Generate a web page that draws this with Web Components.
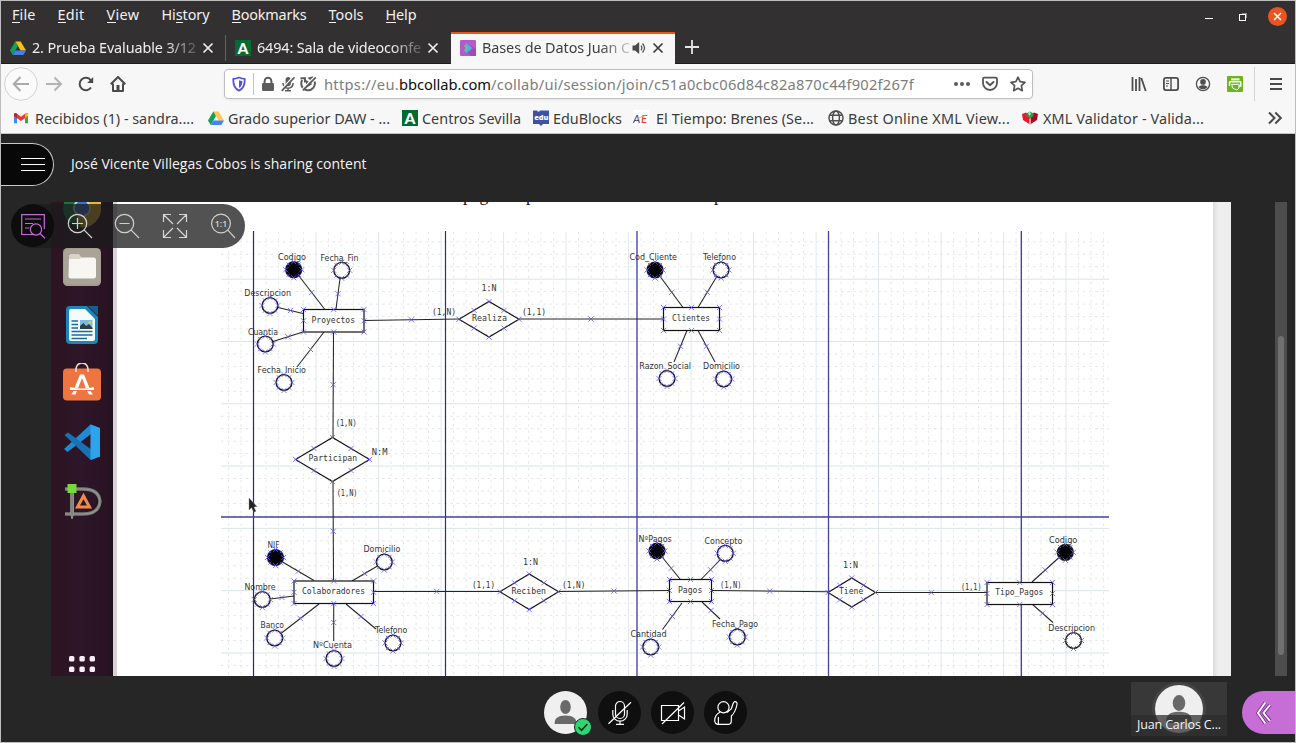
<!DOCTYPE html>
<html lang="es">
<head>
<meta charset="utf-8">
<title>Bases de Datos</title>
<style>
html,body{margin:0;height:100%;overflow:hidden;background:#262626}
body{font-family:"Noto Sans","Open Sans",sans-serif}
</style>
</head>
<body>
<browser-window></browser-window>
<script>
const define=(name,css,html,after)=>{
  const t=document.createElement('template');
  t.innerHTML=`<style>*{box-sizing:border-box}${css}</style>${html}`;
  customElements.define(name,class extends HTMLElement{
    connectedCallback(){
      if(this.shadowRoot)return;
      this.attachShadow({mode:'open'}).append(t.content.cloneNode(true));
      if(after)after(this,this.shadowRoot);
    }
  });
};

/* Text that spreads its letters to fill a given advance width */
define('fit-text',':host{display:inline-block;white-space:pre;flex:none}span{display:inline-block}','<span><slot></slot></span>',(el,root)=>{
  const w=+el.getAttribute('w'), s=root.querySelector('span');
  el.style.width=w+'px';
  s.style.letterSpacing=((w-s.getBoundingClientRect().width)/el.textContent.length)+'px';
});

const person='<circle cx="24" cy="24" r="24" fill="#efefef"/>';
const drive=(a,b,c)=>`<path d="M5.3 1.5H10.7L16 10.5H10.6Z" fill="${b}"/><path d="M5.3 1.5L0 10.5L2.7 15L8 6Z" fill="${a}"/><path d="M5.4 10.5H16L13.3 15H2.7Z" fill="${c}"/>`;
const ICONS={
 drive:[16,16,drive('#12a05c','#fdbf12','#3f7ff0')],
 drive2:[16,16,drive('#12a05c','#fdc95a','#4285f4')],
 junta:[16,16,'<rect width="16" height="16" fill="#036a31"/><text x="8" y="13.6" text-anchor="middle" font-family="Lato" font-weight="900" font-size="15.5" fill="#fff">A</text>'],
 collab:[16,16,'<rect width="16" height="16" rx="1.2" fill="#b55ac8"/><path d="M9 5L13 8.5L8 13L11 16H16V9Z" fill="#a14ab6"/><path d="M5.5 3.8L10.3 8L5.5 12.3" fill="none" stroke="#29c6e8" stroke-width="2.2"/><path d="M4.5 5.8L7.3 8L4.5 10.4" fill="none" stroke="#6be06a" stroke-width="1.3"/>'],
 close:[12,12,'<path d="M1.5 1.5L10.5 10.5M10.5 1.5L1.5 10.5" stroke="currentColor" stroke-width="1.7" fill="none"/>'],
 plus:[14,14,'<path d="M7 0V14M0 7H14" stroke="#e6e6e6" stroke-width="1.8"/>'],
 sound:[14,14,'<path d="M0.5 4.5H3L7.2 1V13L3 9.5H.5Z" fill="#4a4a4a"/><path d="M9 4.6Q10.6 7 9 9.4M10.5 2.5Q14.5 7 10.5 11.5" stroke="#4a4a4a" fill="none" stroke-width="1.2"/>'],
 back:[34,34,'<circle cx="17" cy="17" r="16.3" fill="#fbfbfb" stroke="#d2d2d2"/><path d="M25 17H10M16.5 10L9.7 17L16.5 24" fill="none" stroke="#ababab" stroke-width="2"/>'],
 forward:[18,18,'<path d="M1 9H16M9.5 2.5L16 9L9.5 15.5" fill="none" stroke="#b3b3b3" stroke-width="2"/>'],
 reload:[16,16,'<path d="M13 11.5A6.2 6.2 0 1 1 12.8 4.3" fill="none" stroke="#4a4a4a" stroke-width="2"/><path d="M15.2 1V7H9.2Z" fill="#4a4a4a"/>'],
 home:[16,16,'<path d="M.7 8.3L8 1L15.3 8.3M3 7.5V15H13V7.5" fill="none" stroke="#4a4a4a" stroke-width="2" stroke-linejoin="round"/><path d="M6.5 9H9.5V15H6.5Z" fill="#4a4a4a"/>'],
 shield:[14,16,'<path d="M7 1.5C9 2.4 11 2.8 12.7 2.8C13 9 11.5 12.8 7 14.6C2.5 12.8 1 9 1.3 2.8C3 2.8 5 2.4 7 1.5Z" fill="none" stroke="#5551d8" stroke-width="1.8" stroke-linejoin="round"/><path d="M7 4.3V12C9.6 10.6 10.4 8 10.4 5Q8.4 4.8 7 4.3Z" fill="#5551d8"/>'],
 lock:[14,16,'<rect x="1" y="7" width="12" height="8" rx="1.3" fill="#5c5c5c"/><path d="M3.6 8V5.2A3.4 3.4 0 0 1 10.4 5.2V8" fill="none" stroke="#5c5c5c" stroke-width="2"/>'],
 micblock:[14,16,'<rect x="4.6" y="1" width="5.2" height="9.2" rx="2.6" fill="#5c5c5c"/><path d="M2 7Q2.5 12.2 7 12.2Q11.7 12.2 12.2 7M7 12V14.5M4 14.7H10" stroke="#5c5c5c" fill="none" stroke-width="1.6"/><path d="M0 14L12 1" stroke="#fff" stroke-width="1.6"/><path d="M.8 14.8L13.5 1.3" stroke="#5c5c5c" stroke-width="1.8"/>'],
 autoblock:[17,16,'<path d="M2.2 4A6.8 6.8 0 1 0 14.6 5.5M.5 2.2H5V6.5M12 4.2L9.5 2.2L13.5 1.2" fill="none" stroke="#5c5c5c" stroke-width="2"/><path d="M6 4V12L12.4 8Z" fill="#5c5c5c"/><path d="M2 13.6L14.2 1" stroke="#fff" stroke-width="1.5"/><path d="M2.8 14.4L15.8 1.3" stroke="#5c5c5c" stroke-width="1.8"/>'],
 dots:[16,16,'<g fill="#5b5b5b"><circle cx="2" cy="8" r="2"/><circle cx="8" cy="8" r="2"/><circle cx="14" cy="8" r="2"/></g>'],
 pocket:[16,16,'<path d="M2.2 1.7H13.8Q15 1.7 15 2.9V7A7 7 0 0 1 1 7V2.9Q1 1.7 2.2 1.7Z" fill="none" stroke="#565656" stroke-width="1.8"/><path d="M4.5 6L8 9.2L11.5 6" fill="none" stroke="#565656" stroke-width="2" stroke-linecap="round"/>'],
 star:[16,16,'<path d="M8 1.2L10.1 5.7L15 6.3L11.4 9.7L12.3 14.7L8 12.3L3.7 14.7L4.6 9.7L1 6.3L5.9 5.7Z" fill="none" stroke="#565656" stroke-width="1.7" stroke-linejoin="round"/>'],
 library:[16,16,'<path d="M1.5 1V15M5 3V15M8.5 1V15M10.3 2L14.7 15" stroke="#4d4d4d" stroke-width="1.8"/>'],
 sidebar:[16,16,'<rect x=".9" y="1.9" width="14.2" height="12.2" rx="2" fill="none" stroke="#4d4d4d" stroke-width="1.8"/><path d="M8 2V14" stroke="#4d4d4d" stroke-width="1.4"/><path d="M3 5H6M3 7.5H6M3 10H5" stroke="#4d4d4d"/>'],
 account:[16,16,'<circle cx="8" cy="8" r="6.6" fill="none" stroke="#4d4d4d" stroke-width="1.3"/><circle cx="8" cy="5.9" r="2.8" fill="#4d4d4d"/><path d="M3.5 11Q5 9 8 9.3Q11 9 12.5 11Q11 13.2 8 13.2Q5 13.2 3.5 11Z" fill="#4d4d4d"/>'],
 print:[16,16,'<rect width="16" height="16" rx="1" fill="#6cb51c"/><rect x="4" y="2.4" width="8.5" height="2" fill="#fff"/><path d="M2.5 10V6.5Q2.5 5.8 3.3 5.8H13Q13.8 5.8 13.8 6.5V10H12" fill="none" stroke="#fff" stroke-width="1.4"/><path d="M4.7 8.3H12V12L9.8 14L5.5 12Z" fill="#6cb51c" stroke="#fff"/>'],
 menu:[12,14,'<path d="M0 2H12M0 7H12M0 12H12" stroke="#4a4a4a" stroke-width="2"/>'],
 gmail:[16,16,'<path d="M1 4.2V13.3H4V7.5Z" fill="#4285f4"/><path d="M15 4.2V13.3H12V7.5Z" fill="#34a853"/><path d="M1 3.5L3 3L8 6.8L13 3L15 3.5V6L8 11L1 6Z" fill="#e93b30"/><path d="M12 4L13.6 2.9L15 3.8V6L12 8Z" fill="#fbbc04"/><path d="M1 6L4 8V4L2.6 2.9L1 3.8Z" fill="#c5221f"/>'],
 edu:[16,16,'<path d="M0 .5H4Q5.5 3 7 .5H16V14H10Q8 17.5 6 14H0Z" fill="#3f52a4"/><text x="8.3" y="10.3" text-anchor="middle" font-family="Open Sans" font-weight="800" font-size="7.4" fill="#fff">edu</text>'],
 ae:[16,16,'<rect width="16" height="16" fill="#fff"/><text x="0" y="12.8" font-family="Lato" font-style="italic" font-size="11.5" fill="#2b3f93">A</text><text x="8" y="12.8" font-family="Lato" font-style="italic" font-size="11.5" fill="#e23338">E</text><path d="M3 10.5Q8 6 13 5" stroke="#f5a623" fill="none" stroke-width=".8"/>'],
 globe:[16,16,'<g fill="none" stroke="#505050" stroke-width="1.5"><circle cx="8" cy="8" r="7"/><ellipse cx="8" cy="8" rx="3.4" ry="7"/><path d="M1.5 5.3H14.5M1.5 10.7H14.5"/></g>'],
 xml:[16,16,'<path d="M0 4L4 2.5L8 6V14.5L1 10Z" fill="#e8182c"/><path d="M16 4L12 2.5L8 6V14.5L15 10Z" fill="#a80c1c"/><path d="M4.5 3.5L8 1.5L11.5 3.5V6L8 8.5L4.5 6Z" fill="#2e9a4b"/><path d="M6 3L8 1.8L9 3.8L7.5 6Z" fill="#c9d8c5"/><path d="M7 9L9 8V13.5L8 14.5L7 14Z" fill="#f5a0a8"/>'],
 more:[14,14,'<path d="M1 1.5L6.5 7L1 12.5M7.3 1.5L12.8 7L7.3 12.5" fill="none" stroke="#4a4a4a" stroke-width="2"/>'],
 page:[26,26,'<g fill="none" stroke="#c469d8" stroke-width="1.2"><path d="M24.3 16V1.7H1.7V21.5H14.5M5 6H21M5 10.5H13M5 15H9.5"/><circle cx="16" cy="16.5" r="5.6"/><path d="M20 20.5L25 25.2"/></g>'],
 zin:[26,26,'<g fill="none" stroke="#d4d4d4" stroke-width="1.2"><circle cx="10.5" cy="10.5" r="9.2"/><path d="M17.2 17.2L25 25M10.5 5V16M5 10.5H16"/></g>'],
 zout:[26,26,'<g fill="none" stroke="#cfcfcf" stroke-width="1.2"><circle cx="10.5" cy="10.5" r="9.2"/><path d="M17.2 17.2L25 25M5.5 10.5H15.5"/></g>'],
 expand:[26,26,'<path d="M1.5 9V1.5H9M17 1.5H24.5V9M24.5 17V24.5H17M9 24.5H1.5V17M1.5 1.5L11 11M24.5 1.5L15 11M24.5 24.5L15 15M1.5 24.5L11 15" fill="none" stroke="#d6d6d6" stroke-width="1.2"/>'],
 one:[26,26,'<g fill="none" stroke="#cfcfcf" stroke-width="1.2"><circle cx="11" cy="10.5" r="9.4"/><path d="M17.8 17.2L25 25"/></g><text x="11" y="13.7" text-anchor="middle" font-family="Open Sans" font-size="8.8" font-weight="600" fill="#d6d6d6">1:1</text>'],
 mic:[26,26,'<g fill="none" stroke="#fff" stroke-width="1.2"><rect x="8.5" y="1.5" width="9" height="17" rx="4.5"/><path d="M5.8 10V14A7.2 7.2 0 0 0 20.2 14V10M13 21.5V24.2M9 24.3H17M1.5 23.8L24 2.3"/></g>'],
 cam:[26,26,'<g fill="none" stroke="#fff" stroke-width="1.2"><path d="M1.5 5.5H18.5V20.5H1.5ZM18.5 11L24.5 7V19L18.5 15M2 24L24 2.5"/></g>'],
 hand:[26,26,'<g fill="none" stroke="#fff" stroke-width="1.2"><circle cx="10.5" cy="7.3" r="5.6"/><path d="M7 12.3C3.5 13.5 1.5 17.5 1.6 21Q2 23.7 4.5 24.3H15.5Q18.5 24 18.3 20.5L18.4 16C21 13.5 23 9.5 24 4.5Q24.4 1.5 21.7 1.7C20 2 19.5 6 18.2 9L14 12.5M5.4 17V24"/></g>'],
 chev:[16,24,'<path d="M9.3 1.5L2 12L9.3 22.5M14 4L7.5 12L14 20" fill="none" stroke="#7d2e92" stroke-width="3.6" stroke-linejoin="round"/><path d="M9.3 1.5L2 12L9.3 22.5M14 4L7.5 12L14 20" fill="none" stroke="#fff" stroke-width="1.9"/>'],
 person:[48,48,person+'<ellipse cx="24" cy="18" rx="6.3" ry="7.9" fill="#696969"/><path d="M11 38Q10.5 26.5 24 26.8Q37.5 26.5 37 38Z" fill="#696969"/>'],
 me:[43,43,'<circle cx="21.5" cy="21.5" r="21.5" fill="#f0f0f0"/><ellipse cx="21.5" cy="16" rx="5.3" ry="7" fill="#696969"/><path d="M10.7 33Q10 24.5 21.5 24.5Q33 24.5 32.3 33Z" fill="#696969"/>'],
 /* dock */
 chrome:[38,26,'<circle cx="19" cy="6.5" r="19" fill="#17763c"/><path d="M19 6.5L35.5 -3A19 19 0 0 1 19 25.5L13 17Z" fill="#d8ab2b"/><path d="M0 -5H38V2H19Z" fill="#c93a2c"/><path d="M38 -2H19V4H38Z" fill="#e8b92d"/><circle cx="19" cy="6" r="9" fill="#d8d8d8"/><circle cx="19" cy="6" r="7.2" fill="#3b73c7"/>'],
 files:[38,38,'<rect width="38" height="38" rx="4.5" fill="#a39c8f"/><rect x="1" y="1" width="36" height="35" rx="4" fill="#aaa398"/><path d="M6 9Q6 6.5 8 6.5H16L18 9.5H31Q33 9.5 33 12V28Q33 30.5 30.5 30.5H8Q5.5 30.5 5.5 28Z" fill="#f8f6f2"/><path d="M7 6.5H16L18 9.5L17 11H6V8Z" fill="#d9d3c9"/>'],
 writer:[34,40,'<path d="M5 1H22L33 12V35Q33 39 29 39H5Q1 39 1 35V5Q1 1 5 1Z" fill="#1b86b7"/><path d="M6 4H20L30 14V34Q30 36 28 36H6Q4 36 4 34V6Q4 4 6 4Z" fill="#f5fafc"/><path d="M23 1H33V11Z" fill="#0f628d"/><path d="M6.5 16H13M6.5 19.5H13M6.5 23H13M6.5 26.5H27.5M6.5 30H27.5M6.5 33.5H22" stroke="#176d9c" stroke-width="1.3"/><rect x="15" y="15" width="12.5" height="9" fill="#7bbde0"/><path d="M15 24V21L18.5 18L21 21L24 19L27.5 23V24Z" fill="#2c3e46"/><circle cx="25" cy="17.2" r="1.3" fill="#f6c62d"/>'],
 soft:[38,38,'<rect y="5.5" width="38" height="32" rx="4" fill="#ee7440"/><path d="M13 9V6A6 6 0 0 1 25 6V9" fill="none" stroke="#f5d5c3" stroke-width="1.7"/><path d="M17 11.5H21L26.5 25H22.8L19 15L15.2 25H11.5Z" fill="#fff"/><path d="M7 24Q19 27 31 24V27H7Z" fill="#fff"/><path d="M10.5 28H14L12.5 31.5H8.5ZM24 28H27.5L30 31.5H26Z" fill="#fff"/>'],
 code:[38,38,'<path d="M27.5 1.5L37 5V33.5L27.5 37L28 11L4.5 29L1 26Z" fill="#1f8ad2"/><path d="M1.5 12L5 9.5L29 27L27.5 37Z" fill="#1672b4"/><path d="M27.5 1.5L37 5V33.5L27.5 37V28.5Z" fill="#2ca4ec"/>'],
 dia:[40,38,'<path d="M2 7H20Q36 7 37 19.5Q36 32 20 32H2" fill="none" stroke="#777b77" stroke-width="3.3"/><path d="M2 7H20Q36 7 37 19.5Q36 32 20 32H2" fill="none" stroke="#969a95" stroke-width="1.2"/><path d="M7.7 5V32L9 37L10.5 32V5Z" fill="#7f837e" stroke="#91958f"/><rect x="4.5" y="2" width="9" height="9" fill="#78d83b"/><path d="M20.5 14L26.5 25H14.5Z" fill="none" stroke="#f18b4a" stroke-width="3"/>'],
 apps:[28,17,'<g fill="#fceef8"><rect x="1" y="1" width="5.4" height="5.4" rx="1.5"/><rect x="11.4" y="1" width="5.4" height="5.4" rx="1.5"/><rect x="21.6" y="1" width="5.4" height="5.4" rx="1.5"/><rect x="1" y="11.5" width="5.4" height="5.4" rx="1.5"/><rect x="11.4" y="11.5" width="5.4" height="5.4" rx="1.5"/><rect x="21.6" y="11.5" width="5.4" height="5.4" rx="1.5"/></g>']
};
define('ui-icon',':host{display:block;flex:none}svg{display:block}','',(el,root)=>{
  const [w,h,body]=ICONS[el.getAttribute('name')];
  root.innerHTML+=`<svg width="${w}" height="${h}" viewBox="0 0 ${w} ${h}">${body}</svg>`;
});

define('menu-bar',`:host{display:flex;height:31px;background:#333031;color:#f2f2f2;font-size:14.4px;line-height:28px;padding:0 8px 0 11px;gap:22px}
 .b{margin-left:auto;display:flex;height:30px;align-items:center;color:#fff}
 u{text-decoration:none;background:linear-gradient(#f2f2f2,#f2f2f2) 0 calc(100% - 1px)/100% 1px no-repeat}
 .min{width:8px;height:1px;background:#fff;margin:4px 26px 0 0}
 .max{width:7px;height:7px;border:1.5px solid #fff;box-shadow:2px -2px 0 -1px #888;margin:2px 22px 0 0}
 .x{width:19px;height:19px;border-radius:50%;background:#e95420;display:grid;place-items:center}
 .x svg{display:block}`,
 `<fit-text w="23.5"><u>F</u>ile</fit-text><fit-text w="27"><u>E</u>dit</fit-text><fit-text w="33"><u>V</u>iew</fit-text><fit-text w="48"><span>Hi<u>s</u>tory</span></fit-text><fit-text w="75"><u>B</u>ookmarks</fit-text><fit-text w="35"><u>T</u>ools</fit-text><fit-text w="31"><u>H</u>elp</fit-text>
 <div class="b"><div class="min"></div><div class="max"></div><div class="x"><svg width="9" height="9"><path d="M1 1L8 8M8 1L1 8" stroke="#fff" stroke-width="1.5"/></svg></div></div>`);

define('browser-tab',`:host{display:flex;width:225px;height:32px;align-items:center;padding:0 11px 0 9px;color:#efefef;font-size:14.4px;border-right:1px solid transparent;flex:none}
 :host([sep]){border-image:linear-gradient(transparent 4px,#656364 4px,#656364 28px,transparent 28px) 1}
 :host([active]){width:224px;background:#f7f7f7;color:#3c3c3c;border-top:2px solid #e95420;border-right:0;padding-left:9px;padding-bottom:2px}
 .t{overflow:hidden;white-space:nowrap;margin-left:6px;height:24px;line-height:24px;-webkit-mask:linear-gradient(90deg,#000 calc(100% - 30px),#0003 100%);mask:linear-gradient(90deg,#000 calc(100% - 30px),#0003 100%)}
 .e{margin-left:auto;display:flex;gap:6px;align-items:center}`,
 `<slot name="i"></slot><div class="t"><slot></slot></div><div class="e"><slot name="s"></slot><ui-icon name="close"></ui-icon></div>`);

define('tab-strip',`:host{display:flex;height:32px;background:#333031;box-shadow:inset 0 -1px #1d1b1c}
 .n{margin:8px 0 0 10px}`,
 `<browser-tab sep><ui-icon slot="i" name="drive"></ui-icon><fit-text w="164">2. Prueba Evaluable 3/12</fit-text></browser-tab>
  <browser-tab><ui-icon slot="i" name="junta"></ui-icon><fit-text w="164">6494: Sala de videoconfe</fit-text></browser-tab>
  <browser-tab active><ui-icon slot="i" name="collab"></ui-icon><fit-text w="148">Bases de Datos Juan C</fit-text><ui-icon slot="s" name="sound"></ui-icon></browser-tab>
  <ui-icon class="n" name="plus"></ui-icon>`);

define('nav-bar',`:host{display:flex;height:41px;align-items:center;background:#f7f7f7;padding:0 13px 1px 3px}
 .url{display:flex;align-items:center;width:809px;height:30px;border:1px solid #bebebe;border-radius:4px;background:#fff;margin-left:98px;padding:0 6px 0 7px;box-shadow:0 1px 3px #0001;font-size:14.7px;color:#7d7d7d}
 .v{width:1px;height:22px;background:#c4c4c4;margin:0 7px 0 7px}
 .r{margin-left:auto;display:flex;gap:12px}
 .k{display:flex;gap:16px;margin-left:auto}
 .s{width:1px;height:34px;background:#d6d6d6;margin:0 15px 0 11px}`,
 `<ui-icon name="back"></ui-icon><ui-icon name="forward" style="margin-left:7px"></ui-icon><ui-icon name="reload" style="margin-left:15px"></ui-icon><ui-icon name="home" style="margin-left:16px"></ui-icon>
 <div class="url"><ui-icon name="shield"></ui-icon><i class="v"></i><ui-icon name="lock"></ui-icon><ui-icon name="micblock" style="margin-left:6px"></ui-icon><ui-icon name="autoblock" style="margin-left:5px"></ui-icon><fit-text w="75" style="margin-left:7px">https://eu.</fit-text><fit-text w="92" style="color:#0c0c0d">bbcollab.com</fit-text><fit-text w="423">/collab/ui/session/join/c51a0cbc06d84c82a870c44f902f267f</fit-text>
 <div class="r"><ui-icon name="dots"></ui-icon><ui-icon name="pocket"></ui-icon><ui-icon name="star"></ui-icon></div></div>
 <div class="k"><ui-icon name="library"></ui-icon><ui-icon name="sidebar"></ui-icon><ui-icon name="account"></ui-icon><ui-icon name="print"></ui-icon></div><i class="s"></i><ui-icon name="menu"></ui-icon>`);

define('book-mark',':host{display:flex;align-items:center;gap:5px}','<slot></slot>');
define('bookmarks-bar',`:host{display:flex;height:29px;align-items:center;background:#f7f7f7;color:#3b3b3b;font-size:14.4px;border-bottom:1px solid #c4c4c4;padding:0 13px 2px 12px}
 book-mark{margin-right:13px}.m{margin-left:auto}`,
 `<book-mark style="gap:6px;margin-right:14px"><ui-icon name="gmail"></ui-icon><fit-text w="159">Recibidos (1) - sandra....</fit-text></book-mark>
 <book-mark style="gap:4px;margin-right:12px"><ui-icon name="drive2"></ui-icon><fit-text w="162">Grado superior DAW - ...</fit-text></book-mark>
 <book-mark style="gap:4px;margin-right:12px"><ui-icon name="junta"></ui-icon><fit-text w="99">Centros Sevilla</fit-text></book-mark>
 <book-mark style="gap:4px;margin-right:11px"><ui-icon name="edu"></ui-icon><fit-text w="69">EduBlocks</fit-text></book-mark>
 <book-mark style="gap:7px;margin-right:14px"><ui-icon name="ae"></ui-icon><fit-text w="158">El Tiempo: Brenes (Se...</fit-text></book-mark>
 <book-mark style="gap:4px;margin-right:12px"><ui-icon name="globe"></ui-icon><fit-text w="162">Best Online XML View...</fit-text></book-mark>
 <book-mark><ui-icon name="xml"></ui-icon><fit-text w="161">XML Validator - Valida...</fit-text></book-mark>
 <ui-icon class="m" name="more"></ui-icon>`);

define('session-header',`:host{display:flex;height:68px;padding-top:9px;color:#f4f4f4;font:14px "Open Sans",sans-serif}
 .p{width:53px;height:43px;background:#080808;border:1px solid #c9c9c9;border-left:0;border-radius:0 22px 22px 0;padding:14px 0 0 20px}
 .p i{display:block;width:24px;height:1px;background:#fff;margin-bottom:5px}
 fit-text{margin-left:17px;line-height:42px}`,
 '<div class="p"><i></i><i></i><i></i></div><fit-text w="295.5">José Vicente Villegas Cobos is sharing content</fit-text>');

define('app-dock',`:host{display:block;width:62px;height:474px;background:linear-gradient(90deg,#2c1420,#2d1628 50%,#291222 90%,#20131d);overflow:hidden}
 div{display:flex;flex-direction:column;align-items:center}`,
 `<div><ui-icon name="chrome"></ui-icon><ui-icon name="files" style="margin-top:20px"></ui-icon><ui-icon name="writer" style="margin-top:19px"></ui-icon><ui-icon name="soft" style="margin-top:18px"></ui-icon><ui-icon name="code" style="margin-top:22px"></ui-icon><ui-icon name="dia" style="margin:21px 0 0 2px"></ui-icon><ui-icon name="apps" style="margin-top:135px"></ui-icon></div>`);

/* Entity-relationship diagram, drawn on a free canvas in window coordinates */
define('er-diagram',':host{display:block;width:1100px;height:474px}svg{display:block}','',(el,root)=>{
  let g='',marks='',over='';
  const L=(x1,y1,x2,y2,c,w=1,d='')=>`<path d="M${x1} ${y1}L${x2} ${y2}" stroke="${c}" stroke-width="${w}" ${d?`stroke-dasharray="${d}"`:''}/>`;
  const X=(x,y)=>{marks+=`M${x-2.6} ${y-2.6}l5.2 5.2M${x+2.6} ${y-2.6}l-5.2 5.2`;};
  for(let i=0;i<71;i++){const x=228.6+i*12.5,m=(i-2)%5===0||false,M=(i-7)%5===0;g+=L(x,232,x,676,M?'#e2e7ed':'#e7e7e9',1,M?'':'2.5 3.7');}
  for(let i=0;i<35;i++){const y=241.8+i*12.46,M=(i-3)%5===0;g+=L(221,y,1109,y,M?'#dce5e8':'#e5e6e8',1,M?'':'2.5 3.7');}
  [[253.5,1.2,'#26268c'],[445.5,1.2,'#2b2b92'],[637,1.7,'#6a68bd'],[828.5,1.3,'#4643a8'],[1021.3,1.3,'#3a37a0']].forEach(([x,w,c])=>g+=L(x,231,x,676,c,w));
  g+=L(221,517,1109,517,'#4340a8',1.4);
  const link=(a,b,c,d)=>{g+=L(a,b,c,d,'#242424',1.05);X((a+c)/2,(b+d)/2);};
  [[299,276,324.5,309],[340,278.5,336,309],[278,307.5,303,313.5],[273,341.5,303,332],[324,332,297,367],
   [364,320.5,459,319],[519,319,663,319],[333.5,332,333,437.5],[333,481.5,333.5,581],
   [660.5,277,683,307.5],[716.5,277,698,307.5],[687,330.5,674,362],[698,330.5,715,362],
   [282.5,562,314,580.5],[377.5,566,352,581],[270,599,294,596],[281.5,633,319,604],[333.7,604,333.7,641],[346,604,376,629],
   [373.5,591.5,500,591.5],[558.5,591.5,669.5,590.5],[711.5,590.5,828,591.7],[875.5,592.5,987,592.5],
   [662.5,557.5,680,579],[720,560,701,579.5],[682,603,662.5,629.5],[702,602,720,619],
   [1058.5,558,1032,582],[1032,604,1053,622.5]].forEach(a=>link(...a));
  [[303.5,309.5,364,332],[663.5,307.5,719.5,330.5],[294,581,373.5,603.5],[669.5,579.5,711.5,601.5],[987,582.5,1052.5,604.5]].forEach(([a,b,c,d])=>{
    over+=`<rect x="${a}" y="${b}" width="${c-a}" height="${d-b}" fill="#fff" stroke="#111" stroke-width="1.2"/>`;
    for(const x of [a,(a+c)/2,c])for(const y of [b,(b+d)/2,d])if(x!==(a+c)/2||y!==(b+d)/2)X(x,y);});
  [[459,519,301.5,337],[295.5,369.5,437.5,481.5],[500,558.5,574,609.5],[828,875.5,578,607]].forEach(([l,r,t,b])=>{
    const cx=(l+r)/2,cy=(t+b)/2;
    over+=`<path d="M${l} ${cy}L${cx} ${t}L${r} ${cy}L${cx} ${b}Z" fill="#fff" stroke="#111" stroke-width="1.1"/>`;
    [[l,cy],[cx,t],[r,cy],[cx,b],[(l+cx)/2,(t+cy)/2],[(r+cx)/2,(t+cy)/2],[(l+cx)/2,(b+cy)/2],[(r+cx)/2,(b+cy)/2]].forEach(p=>X(...p));});
  [[293.7,269.7,1],[341.7,270.3],[270,305.5],[265.3,344],[284,382.5],[655,270,1],[721,270],[667,378.5],[723.7,379],
   [275.5,557.5,1],[384.3,562],[262.3,599.5],[274.7,638],[334,658.5],[393,643],[657,551,1],[725.3,553.3],[650.7,647],[737.3,637],[1065.3,552.3,1],[1073.5,640.5]].forEach(([x,y,f])=>{
    over+=`<circle cx="${x}" cy="${y}" r="7.9" fill="${f?'#050508':'#fff'}" stroke="#15151d" stroke-width="1.4"/>`;
    [[-8,0],[8,0],[0,-8],[0,8],[-5.7,-5.7],[5.7,-5.7],[-5.7,5.7],[5.7,5.7]].forEach(([a,b],i)=>{if(i<4)X(x+a,y+b);else marks+=`M${x+a-1.5} ${y+b-1.5}l3 3M${x+a+1.5} ${y+b-1.5}l-3 3`;});});
  const T=(s,a,b,y,f='DejaVu Sans',z=8.4)=>`<text x="${a}" y="${y}" textLength="${b-a}" lengthAdjust="spacingAndGlyphs" font-family="${f}" font-size="${z}" fill="#333">${s}</text>`;
  const labels=[['Codigo',278,306,259.7],['Fecha_Fin',320.5,358.5,260.5],['Descripcion',244.3,291,296],['Cuantia',248,278,335],['Fecha_Inicio',257.5,306,373],['Cod_Cliente',629.5,677,259.7],['Telefono',703,736,259.7],['Razon_Social',639.3,691,368.7],['Domicilio',703,740,369.3],['NIF',267.5,279.5,547.5],['Domicilio',363.5,400.3,552],['Nombre',244.5,275.7,590],['Banco',260.5,284,628],['NºCuenta',313,352,648],['Telefono',375,407.3,633],['NºPagos',638.5,671.7,541.5],['Concepto',704.5,742.3,544],['Cantidad',630.5,666.5,637],['Fecha_Pago',712,758,627],['Codigo',1049,1077.3,543.3],['Descripcion',1048.3,1095,630.5]].map(a=>T(...a)).join('')+
   [['Proyectos',311.5,355,322.7],['Clientes',672,710,320.7],['Colaboradores',302,365,594.3],['Pagos',678,702.3,592.7],['Tipo_Pagos',995.3,1043.3,595.3],['Realiza',472,507,320.7],['Participan',308.5,357,461.3],['Reciben',511.5,546,594.3],['Tiene',839,863.3,594.3],
    ['1:N',481.5,496.5,290.7],['(1,N)',432,456,314.6],['(1,1)',522,546,314.6],['(1,N)',335.7,356.7,426.3],['N:M',371.7,387.5,454.6],['(1,N)',336.7,357.5,496],['1:N',523,538,565],['(1,1)',472,495,588.3],['(1,N)',562,585.5,588.3],['(1,N)',720,741.5,588.3],['1:N',843,858,568],['(1,1)',961,981.5,590]].map(a=>T(...a,'DejaVu Sans Mono')).join('');
  const S=(s,x)=>`<text x="${x}" y="200.7" font-family="Liberation Serif" font-size="17.5" fill="#111">${s}</text>`;
  root.innerHTML+=`<svg width="1100" height="474" viewBox="113 202 1100 474">${S('pag',463)+S('p',526)+S('p',714)}<g fill="none">${g}</g>${over}<path d="${marks}" fill="none" stroke="#625bea" stroke-width=".8"/>${labels}<path d="M249 498L249 510L251.6 507.7L253.8 512.2L256 511.2L253.8 507L257 506.6Z" fill="#222" stroke="#888" stroke-width=".4"/></svg>`;
});

define('zoom-tools',`:host{display:flex;align-items:center;width:234px;height:44px;border-radius:22px;background:rgba(28,28,28,.76);gap:22px;overflow:hidden}
 div{width:43px;height:43px;border-radius:50%;background:#0d0d0d;display:grid;place-items:center;margin-right:-9px;align-self:flex-start}`,
 '<div><ui-icon name="page"></ui-icon></div><ui-icon name="zin"></ui-icon><ui-icon name="zout" style="margin-left:-1px"></ui-icon><ui-icon name="expand"></ui-icon><ui-icon name="one"></ui-icon>');

define('shared-stage',`:host{display:flex;height:474px;padding-left:50px;position:relative}
 .sheet{display:flex;width:1100px;height:474px;background:#fff;box-shadow:inset 4px 0 #d7d2d8}
 .edge{width:18px;background:linear-gradient(90deg,#dcdcdc,#eee 5px)}
 .sb{width:12px;height:474px;margin-left:44px;background:#4d4d4d;padding:134px 3px 0}
 .sb i{display:block;width:6px;height:319px;border-radius:3px;background:#707070}
 zoom-tools{position:absolute;left:10px;top:2px}`,
 '<app-dock></app-dock><div class="sheet"><er-diagram></er-diagram></div><div class="edge"></div><div class="sb"><i></i></div><zoom-tools></zoom-tools>');

define('round-button',':host{display:grid;place-items:center;width:43px;height:43px;border-radius:50%;background:#0f0f0f}','<slot></slot>');
define('session-footer',`:host{display:flex;height:66px;padding-left:543px;color:#f5f5f5;font:12.5px "Open Sans",sans-serif}
 .c{display:flex;gap:10px;padding-top:15px}
 .me{position:relative;margin-right:1px}
 .ok{position:absolute;left:30px;top:27px;display:block}
 .card{width:96px;height:54px;margin:6px 0 0 384px;background:#383838;overflow:hidden;position:relative}
 .card ui-icon{margin:3px 24px;border-radius:50%;box-shadow:0 0 0 3px #454545}
 .name{position:absolute;left:0;right:0;bottom:0;height:21px;background:#2c2c2cbb;padding-left:6px;line-height:19px}
 .open{width:53px;height:43px;margin:15px 0 0 15px;background:#c66dd6;border-radius:22px 0 0 22px;padding:10px 0 0 14px}`,
 `<div class="c"><div class="me"><ui-icon name="me"></ui-icon><svg class="ok" width="18" height="18"><circle cx="9" cy="9" r="8.5" fill="#2ed573" stroke="#202020"/><path d="M4.5 9.3L7.6 12.3L13.3 6" fill="none" stroke="#102417" stroke-width="1.5"/></svg></div>
 <round-button><ui-icon name="mic"></ui-icon></round-button><round-button><ui-icon name="cam"></ui-icon></round-button><round-button><ui-icon name="hand"></ui-icon></round-button></div>
 <div class="card"><ui-icon name="person"></ui-icon><div class="name"><fit-text w="84">Juan Carlos C...</fit-text></div></div>
 <div class="open"><ui-icon name="chev"></ui-icon></div>`);

define('browser-window',':host{display:flex;flex-direction:column;width:1296px;height:743px;border:1px solid #bdbdbd;background:#262626;box-sizing:border-box;overflow:hidden}:host>*{flex:none}',
 '<menu-bar></menu-bar><tab-strip></tab-strip><nav-bar></nav-bar><bookmarks-bar></bookmarks-bar><session-header></session-header><shared-stage></shared-stage><session-footer></session-footer>');
</script>
</body>
</html>
